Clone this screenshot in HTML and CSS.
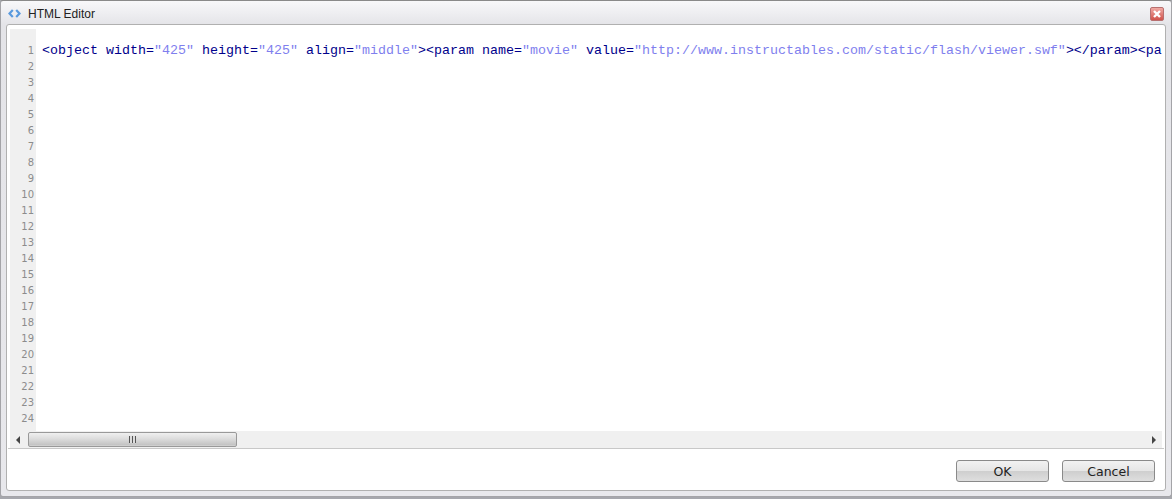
FILE: index.html
```html
<!DOCTYPE html>
<html lang="en">
<head>
<meta charset="utf-8">
<title>HTML Editor</title>
<link rel="stylesheet" href="styles.css">
</head>
<body>
<div class="window">
  <header class="titlebar">
    <svg class="logo" width="13" height="9" viewBox="0 0 13 9"><path d="M4.800 1 1.500 4.500 4.800 8" fill="none" stroke="#5a9ade" stroke-width="2.200"/><path d="M8.200 1 11.500 4.500 8.200 8" fill="none" stroke="#5a9ade" stroke-width="2.200"/></svg>
    <span class="title">HTML Editor</span>
    <button class="close" type="button" aria-label="Close"><svg width="8" height="8" viewBox="0 0 8 8"><path d="M1 1l6 6M7 1 1 7" stroke="#fff" stroke-width="2.400"/></svg></button>
  </header>
  <div class="panel">
    <div class="editor">
      <div class="code-area">
        <div class="gutter">
          <span>1</span><span>2</span><span>3</span><span>4</span><span>5</span><span>6</span><span>7</span><span>8</span><span>9</span><span>10</span><span>11</span><span>12</span><span>13</span><span>14</span><span>15</span><span>16</span><span>17</span><span>18</span><span>19</span><span>20</span><span>21</span><span>22</span><span>23</span><span>24</span>
        </div>
        <pre class="code"><span class="tag">&lt;object width=</span><span class="str">"425"</span><span class="tag"> height=</span><span class="str">"425"</span><span class="tag"> align=</span><span class="str">"middle"</span><span class="tag">&gt;&lt;param name=</span><span class="str">"movie"</span><span class="tag"> value=</span><span class="str">"http://www.instructables.com/static/flash/viewer.swf"</span><span class="tag">&gt;&lt;/param&gt;&lt;pa</span></pre>
      </div>
      <div class="hscroll">
        <span class="arrow arrow-left"></span>
        <div class="track">
          <div class="thumb"><span class="grip"></span></div>
        </div>
        <span class="arrow arrow-right"></span>
      </div>
    </div>
    <footer class="actions">
      <button class="btn" type="button">OK</button>
      <button class="btn" type="button">Cancel</button>
    </footer>
  </div>
</div>
</body>
</html>
```
FILE: styles.css
```css
html, body {
  margin: 0;
  padding: 0;
  width: 1172px;
  height: 499px;
  overflow: hidden;
  background: #a6a7ad;
}
.window {
  box-sizing: border-box;
  height: 497px;
  display: flex;
  flex-direction: column;
  padding: 0 5px 5px;
  border: 1px solid #a4a4a8;
  border-top-color: #8a8a8a;
  border-radius: 3px;
  background: linear-gradient(#f8f8fa 0, #e4e4e8 24px, #e8e8ec 100%);
  font-family: "Liberation Sans", Arial, sans-serif;
}
.titlebar {
  flex: none;
  height: 23px;
  display: flex;
  align-items: center;
  padding-left: 2px;
}
.logo { margin-right: 7px; margin-top: 1px; }
.title { font-size: 12px; color: #222; margin-top: 2px; }
.close {
  margin-left: auto;
  margin-right: 2px;
  margin-top: 2px;
  width: 14px;
  height: 14px;
  padding: 0;
  display: flex;
  align-items: center;
  justify-content: center;
  border: 1px solid #b87070;
  border-radius: 2px;
  background: linear-gradient(#f0aaa4, #d0524a);
}
.panel {
  flex: 1;
  display: flex;
  flex-direction: column;
  min-height: 0;
  background: #fff;
  border: 1px solid #b0b0b0;
  border-radius: 3px;
  padding: 4px 3px 0 3px;
}
.editor {
  flex: 1;
  display: flex;
  flex-direction: column;
  min-height: 0;
}
.code-area {
  flex: 1;
  display: flex;
  min-height: 0;
  overflow: hidden;
}
.gutter {
  flex: none;
  box-sizing: border-box;
  width: 26px;
  padding: 14px 2px 0 0;
  background: #f0f0f0;
  display: flex;
  flex-direction: column;
  align-items: flex-end;
  font-family: "DejaVu Sans", Verdana, sans-serif;
  font-size: 10px;
  color: #8c8c8c;
}
.gutter span { height: 16px; line-height: 16px; }
.code {
  margin: 0;
  padding: 14px 0 0 6px;
  font-family: "Liberation Mono", "Courier New", monospace;
  font-size: 13.33px;
  line-height: 16px;
  white-space: pre;
}
.tag { color: #00008b; }
.str { color: #7f7fee; }
.hscroll {
  flex: none;
  height: 17px;
  display: flex;
  align-items: center;
  background: #f0f0f0;
}
.arrow { flex: none; width: 0; height: 0; border-top: 4px solid transparent; border-bottom: 4px solid transparent; }
.arrow-left { border-right: 4px solid #444; margin: 0 8px 0 6px; }
.arrow-right { border-left: 4px solid #444; margin: 0 6px 0 9px; }
.track { flex: 1; height: 15px; }
.thumb {
  box-sizing: border-box;
  width: 209px;
  height: 15px;
  display: flex;
  align-items: center;
  justify-content: center;
  border: 1px solid #999;
  border-radius: 2px;
  background: linear-gradient(#f0f0f0, #dcdcdc 45%, #c4c4c4 90%, #d4d4d4);
}
.grip {
  width: 7px;
  height: 7px;
  background: repeating-linear-gradient(90deg, #555 0 1px, #ddd 1px 3px);
}
.actions {
  flex: none;
  height: 42px;
  box-sizing: border-box;
  border-top: 1px solid #c8c8c8;
  margin: 0 -2px;
  display: flex;
  justify-content: flex-end;
  align-items: flex-start;
  gap: 13px;
  padding: 11px 9px 0 0;
}
.btn {
  box-sizing: border-box;
  width: 93px;
  height: 22px;
  padding: 0;
  border: 1px solid #8a8a8a;
  border-radius: 3px;
  background: linear-gradient(#f2f2f2 0, #e6e6e6 48%, #cfcfcf 52%, #dedede 100%);
  font-family: "DejaVu Sans", Verdana, sans-serif;
  font-size: 12.5px;
  color: #222;
}
```
